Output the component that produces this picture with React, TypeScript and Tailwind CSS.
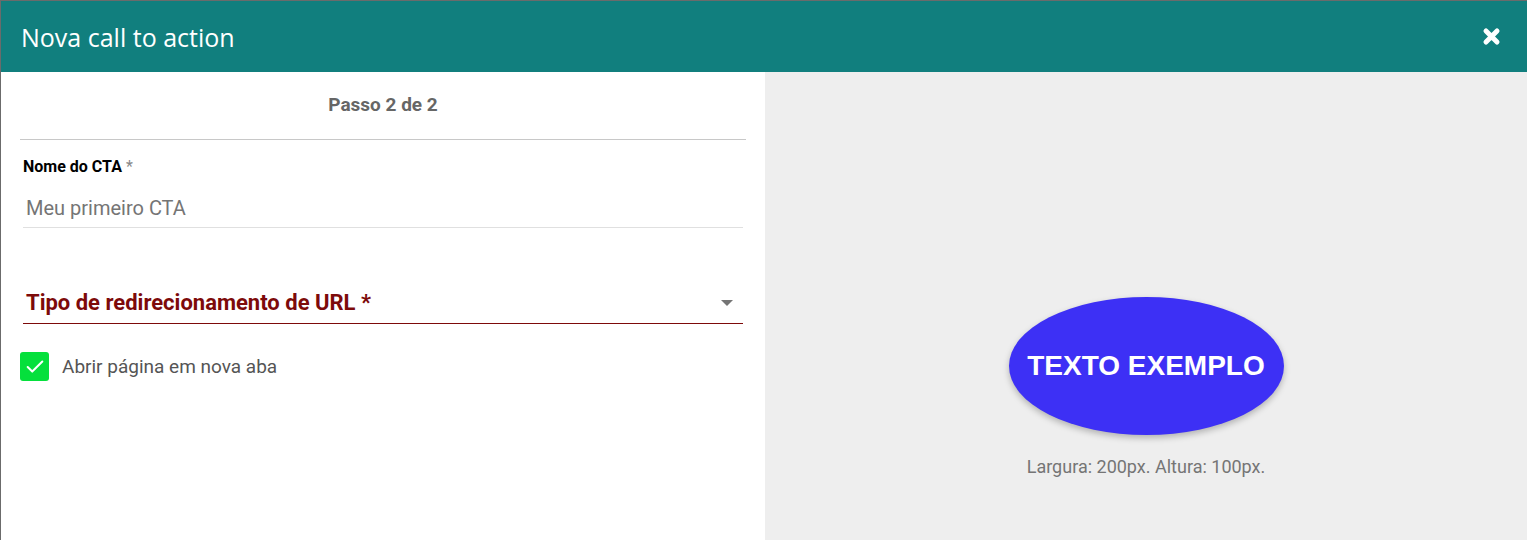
import { Check } from "lucide-react";

function CloseIcon() {
  return (
    <svg width="19" height="19" viewBox="0 0 19 19">
      <path d="M4 4 L15 15 M15 4 L4 15" stroke="white" strokeWidth="5" strokeLinecap="round" />
    </svg>
  );
}

export default function App() {
  return (
    <div className="h-[540px] w-[1527px] overflow-hidden bg-[#6b6b6b] pl-px pt-px font-['Roboto',sans-serif]">
      <div className="flex h-full flex-col bg-white">
        <header className="flex h-[71px] shrink-0 items-center justify-between bg-[#117f7e] pl-5 pr-[26px]">
          <h1 className="font-['Open_Sans',sans-serif] text-[25px] leading-[30px] text-white">Nova call to action</h1>
          <button className="flex items-center justify-center">
            <CloseIcon />
          </button>
        </header>

        <div className="flex flex-1">
          <section className="w-[764px] shrink-0 px-[19px]">
            <div className="flex h-[68px] items-center justify-center border-b border-[#c8c8c8] text-[19px] font-bold text-[#666]">
              Passo 2 de 2
            </div>

            <div className="px-[3px]">
              <label className="mt-[17px] block text-[16px] font-bold leading-[19px] text-black">
                Nome do CTA<span className="ml-1 font-normal text-[#888]">*</span>
              </label>
              <div className="border-b border-[#e0e0e0] pb-[7px] pl-[3px] pt-[20px] text-[20px] leading-[24px] text-[#757575]">
                Meu primeiro CTA
              </div>

              <div className="mt-[62px] flex items-center justify-between border-b border-[#7d0a0a] pb-[8px] pl-[3px] pr-[10px]">
                <span className="text-[22px] font-bold leading-[25px] text-[#7d0a0a]">Tipo de redirecionamento de URL *</span>
                <span className="h-0 w-0 border-x-[6px] border-t-[6px] border-x-transparent border-t-[#757575]" />
              </div>
            </div>

            <div className="mt-[28px] flex items-center gap-[13px]">
              <span className="flex h-[29px] w-[29px] items-center justify-center rounded-[3px] bg-[#05e03c]">
                <Check className="h-[22px] w-[22px] text-white" strokeWidth={2.2} />
              </span>
              <span className="pt-px text-[19px] text-[#555]">Abrir página em nova aba</span>
            </div>
          </section>

          <section className="flex flex-1 flex-col items-center bg-[#eeeeee] pt-[225px]">
            <div className="flex h-[138px] w-[275px] items-center justify-center rounded-[50%] bg-[#3d30f5] shadow-[0_3px_6px_rgba(0,0,0,0.25)]">
              <span className="font-['Liberation_Sans',Arial,sans-serif] text-[28px] font-bold text-white">TEXTO EXEMPLO</span>
            </div>
            <p className="mt-[21px] text-[18px] leading-[21px] text-[#757575]">Largura: 200px. Altura: 100px.</p>
          </section>
        </div>
      </div>
    </div>
  );
}
